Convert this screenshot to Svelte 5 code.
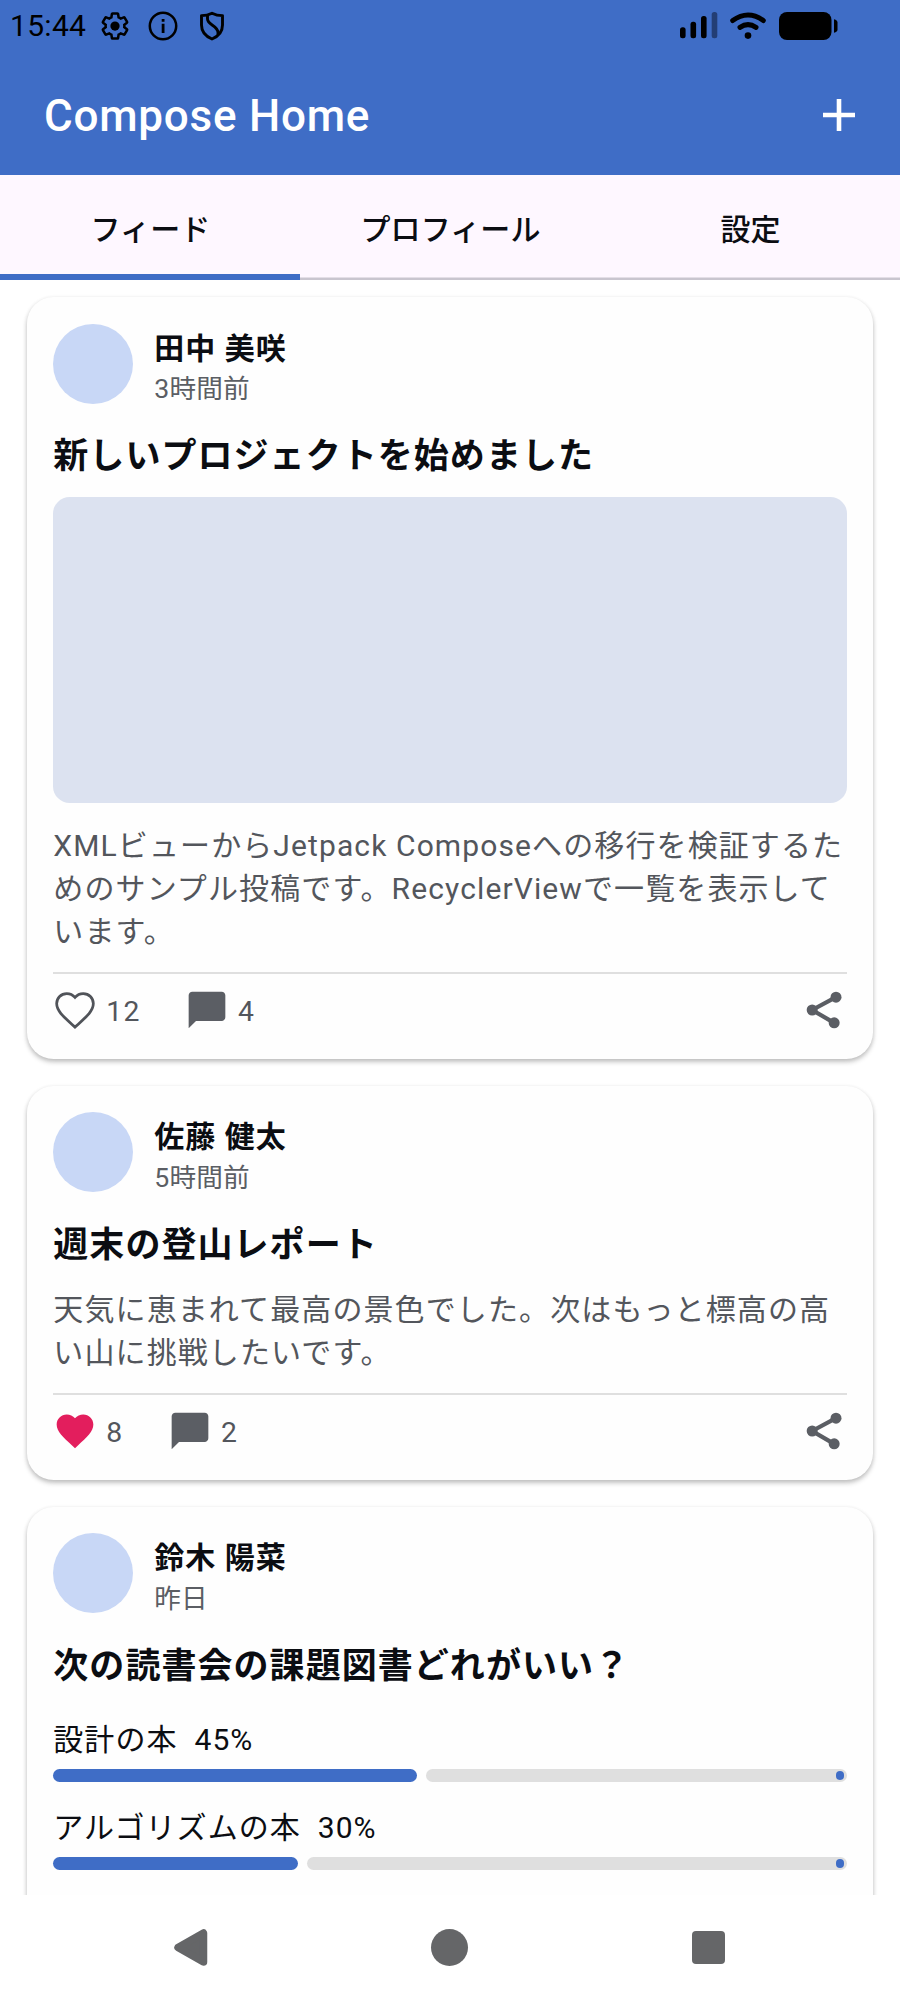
<script>
  const tabs = ['フィード', 'プロフィール', '設定'];
  const posts = [
    {
      name: '田中 美咲', time: '3時間前', title: '新しいプロジェクトを始めました', image: true,
      body: ['XMLビューからJetpack Composeへの移行を検証するた', 'めのサンプル投稿です。RecyclerViewで一覧を表示して', 'います。'],
      likes: 12, liked: false, comments: 4
    },
    {
      name: '佐藤 健太', time: '5時間前', title: '週末の登山レポート',
      body: ['天気に恵まれて最高の景色でした。次はもっと標高の高', 'い山に挑戦したいです。'],
      likes: 8, liked: true, comments: 2
    },
    {
      name: '鈴木 陽菜', time: '昨日', title: '次の読書会の課題図書どれがいい？',
      poll: [{ label: '設計の本', pct: 45 }, { label: 'アルゴリズムの本', pct: 30 }]
    }
  ];
  const heart = 'M12 21.35l-1.45-1.32C5.4 15.36 2 12.28 2 8.5 2 5.42 4.42 3 7.5 3c1.74 0 3.41.81 4.5 2.09C13.09 3.81 14.76 3 16.5 3 19.58 3 22 5.42 22 8.5c0 3.78-3.4 6.86-8.55 11.54L12 21.35z';
  const gear = 'M19.43 12.98c.04-.32.07-.64.07-.98 0-.34-.03-.66-.07-.98l2.11-1.65c.19-.15.24-.42.12-.64l-2-3.46c-.09-.16-.26-.25-.44-.25-.06 0-.12.01-.17.03l-2.49 1c-.52-.4-1.08-.73-1.69-.98l-.38-2.65C14.46 2.18 14.25 2 14 2h-4c-.25 0-.46.18-.49.42l-.38 2.65c-.61.25-1.17.59-1.69.98l-2.49-1c-.06-.02-.12-.03-.18-.03-.17 0-.34.09-.43.25l-2 3.46c-.13.22-.07.49.12.64l2.11 1.65c-.04.32-.07.65-.07.98 0 .33.03.66.07.98l-2.11 1.65c-.19.15-.24.42-.12.64l2 3.46c.09.16.26.25.44.25.06 0 .12-.01.17-.03l2.49-1c.52.4 1.08.73 1.69.98l.38 2.65c.03.24.24.42.49.42h4c.25 0 .46-.18.49-.42l.38-2.65c.61-.25 1.17-.59 1.69-.98l2.49 1c.06.02.12.03.18.03.17 0 .34-.09.43-.25l2-3.46c.12-.22.07-.49-.12-.64l-2.11-1.65z';
</script>

<div class="screen">
  <header>
    <div class="status">
      <span class="clock">15:44</span>
      <svg class="gear" width="30" height="30" viewBox="0 0 24 24">
        <path d={gear} fill="none" stroke="#000" stroke-width="2" />
        <circle cx="12" cy="12" r="3.700" />
      </svg>
      <svg class="info" width="30" height="30" viewBox="0 0 30 30">
        <circle cx="15" cy="15" r="13.200" fill="none" stroke="#000" stroke-width="2.500" />
        <path d="M13.700 12.800h2.800v9.200h-2.800zM13.700 8h2.800v2.800h-2.800z" />
      </svg>
      <svg class="shield" width="26" height="30" viewBox="0 0 26 30" fill="none" stroke="#000" stroke-width="2.900" stroke-linejoin="round">
        <path d="M13 2.200C9.500 4 6 4.600 2.500 4.600V14c0 6.500 4.500 11.500 10.500 14 6-2.500 10.500-7.500 10.500-14V4.600C20 4.600 16.500 4 13 2.200z" />
        <path d="M8.500 4.200V8c0 6 10.500 6.500 10.500 13.500v2" />
      </svg>
      <span class="grow"></span>
      <svg class="signal" width="38" height="28" viewBox="0 0 38 28">
        <rect x="0" y="15.300" width="5.600" height="11" rx="2.500" />
        <rect x="10.500" y="9.700" width="5.600" height="16.600" rx="2.500" />
        <rect x="21" y="4" width="5.600" height="22.300" rx="2.500" />
        <rect x="31.700" y="0" width="5.600" height="26.300" rx="2.500" fill="#233e75" />
      </svg>
      <svg class="wifi" width="36" height="28" viewBox="0 0 36 28" fill="none" stroke="#000" stroke-width="5" stroke-linecap="round">
        <path d="M2.700 8.500Q18-2.500 33.300 8.500" />
        <path d="M10 15.300Q18 10 26 15.300" />
        <circle cx="18" cy="23.600" r="3.300" fill="#000" stroke="none" />
      </svg>
      <svg class="battery" width="60" height="28" viewBox="0 0 60 28">
        <rect width="52.500" height="28" rx="8" />
        <path d="M55 7.200q3.500.8 3.500 3.300v7q0 2.500-3.500 3.300z" />
      </svg>
    </div>
    <div class="appbar">
      <h1>Compose Home</h1>
      <svg width="32" height="32" viewBox="0 0 32 32" stroke="#fff" stroke-width="4.600"><path d="M0 16h32M16 0v32" /></svg>
    </div>
  </header>
  <nav class="tabs">
    {#each tabs as tab, i}
      <div class="tab" class:active={i === 0}>{tab}</div>
    {/each}
  </nav>
  <main>
    {#each posts as post}
      <article>
        <div class="author">
          <div class="avatar"></div>
          <div>
            <div class="name">{post.name}</div>
            <div class="time">{post.time}</div>
          </div>
        </div>
        <h2>{post.title}</h2>
        {#if post.image}<div class="image"></div>{/if}
        {#if post.body}
          <p class:after-image={post.image}>
            {#each post.body as line}<span>{line}</span>{/each}
          </p>
          <div class="actions">
            <svg width="44" height="44" viewBox="0 0 24 24" overflow="visible">
              {#if post.liked}
                <path d={heart} fill="#e31e5d" />
              {:else}
                <path d={heart} fill="none" stroke="#505359" stroke-width="1.500" />
              {/if}
            </svg>
            <span class="count likes">{post.likes}</span>
            <svg width="44" height="44" viewBox="0 0 24 24" fill="#5b5e64">
              <path d="M20 2H4c-1.100 0-2 .9-2 2v18l4-4h14c1.100 0 2-.9 2-2V4c0-1.100-.9-2-2-2z" />
            </svg>
            <span class="count">{post.comments}</span>
            <span class="grow"></span>
            <svg class="share" width="44" height="44" viewBox="0 0 24 24" fill="#5b5e64">
              <path d="M18 5L5 12l12 7" fill="none" stroke="#5b5e64" stroke-width="2.300" />
              <circle cx="18" cy="5" r="3" /><circle cx="5" cy="12" r="3" /><circle cx="17" cy="19" r="3" />
            </svg>
          </div>
        {/if}
        {#if post.poll}
          <div class="poll">
            {#each post.poll as option}
              <div class="option">
                <div class="label">{option.label}{'  '}{option.pct}%</div>
                <div class="bar">
                  <div class="fill" style="width: calc({option.pct}% + 6.67px)"></div>
                  <div class="track"><i></i></div>
                </div>
              </div>
            {/each}
          </div>
        {/if}
      </article>
    {/each}
  </main>
  <footer>
    <svg width="34" height="37" viewBox="0 0 34 37"><path d="M4 18.500L29.500 4v29z" fill="#656668" stroke="#656668" stroke-width="7.500" stroke-linejoin="round" /></svg>
    <div class="home"></div>
    <div class="recent"></div>
  </footer>
</div>

<style>
  :global(body) { margin: 0; background: #fff; }
  .screen { width: 900px; height: 2000px; display: flex; flex-direction: column; overflow: hidden; background: #fff; color: #0b0d12; font-family: Roboto, "Noto Sans CJK JP", sans-serif; }
  svg { display: block; flex: none; }
  .grow { flex: 1; }
  header { height: 174.670px; flex: none; background: #3f6dc6; }
  .status { height: 52px; display: flex; align-items: center; padding: 0 61px 0 10px; color: #000; }
  .clock { font-size: 30px; line-height: 36px; width: 90px; letter-spacing: 0.3px; }
  .info { margin-left: 18px; }
  .shield { margin-left: 20.500px; }
  .wifi { margin-left: 12.500px; }
  .battery { margin-left: 13px; }
  .appbar { display: flex; justify-content: space-between; align-items: center; height: 125px; padding: 0 45px 0 44px; }
  h1 { margin: 2px 0 0; font-size: 44px; font-weight: 500; line-height: 52px; letter-spacing: 0.760px; color: #fff; }
  .tabs { display: flex; flex: none; height: 105.330px; background: #fef7ff; box-shadow: inset 0 -2.500px #c9c5cf; }
  .tab { flex: 1; box-sizing: border-box; border-bottom: 6.670px solid transparent; padding: 6px 0 0 1px; display: flex; align-items: center; justify-content: center; font-size: 30px; font-weight: 500; letter-spacing: 0.100px; }
  .tab.active { border-color: #3f6dc6; }
  main { flex: 1; min-height: 0; overflow: hidden; padding: 17px 26.670px 0; display: flex; flex-direction: column; gap: 26.600px; }
  article { flex: none; border-radius: 26.670px; padding: 26.670px; background: #fefefe; box-shadow: 0 3px 5px rgba(0,0,0,.22), 0 1px 4px rgba(0,0,0,.08); }
  article:last-child { padding-bottom: 120px; }
  .author { display: flex; gap: 21px; height: 80px; }
  .avatar { width: 80px; height: 80px; border-radius: 50%; background: #c8d7f6; }
  .name { margin-top: 5px; font-size: 30px; font-weight: 700; line-height: 40px; letter-spacing: 1px; }
  .time { padding-top: 0.500px; font-size: 26.670px; line-height: 40px; letter-spacing: 0.100px; color: #5b5e64; }
  h2 { margin: 30.700px 0 0; font-size: 35px; font-weight: 700; line-height: 46.670px; letter-spacing: 1.050px; }
  .image { height: 306px; margin-top: 16px; border-radius: 16.670px; background: #dce2f0; }
  p { margin: 18px 0 0; font-size: 30px; line-height: 43.330px; letter-spacing: 1.110px; color: #53565c; white-space: nowrap; }
  p.after-image { margin-top: 20.500px; }
  p span { display: block; }
  .actions { margin-top: 18.700px; padding-top: 14.300px; border-top: 2px solid #dfdfdf; display: flex; align-items: center; }
  .count { margin-left: 9px; font-size: 28.330px; line-height: 36px; letter-spacing: 1.200px; color: #53565c; padding-top: 3px; }
  .likes { margin-right: 44.500px; }
  .poll { padding-top: 29px; }
  .option { height: 88.500px; }
  .label { font-size: 30px; line-height: 40px; letter-spacing: 1.050px; white-space: pre; }
  .bar { display: flex; gap: 8.900px; height: 13.330px; margin-top: 9px; }
  .fill { flex: none; border-radius: 7px; background: #3f6dc6; }
  .track { flex: 1; display: flex; align-items: center; justify-content: flex-end; padding-right: 2.330px; border-radius: 7px; background: #dfdfdf; }
  i { width: 8.670px; height: 8.670px; border-radius: 50%; background: #3f6dc6; }
  footer { height: 105px; flex: none; box-sizing: border-box; padding: 0 175px 0 173.500px; display: flex; align-items: center; justify-content: space-between; background: #fff; }
  .home { width: 37px; height: 37px; border-radius: 50%; background: #656668; }
  .recent { width: 33.500px; height: 33.500px; border-radius: 4px; background: #656668; }
</style>
